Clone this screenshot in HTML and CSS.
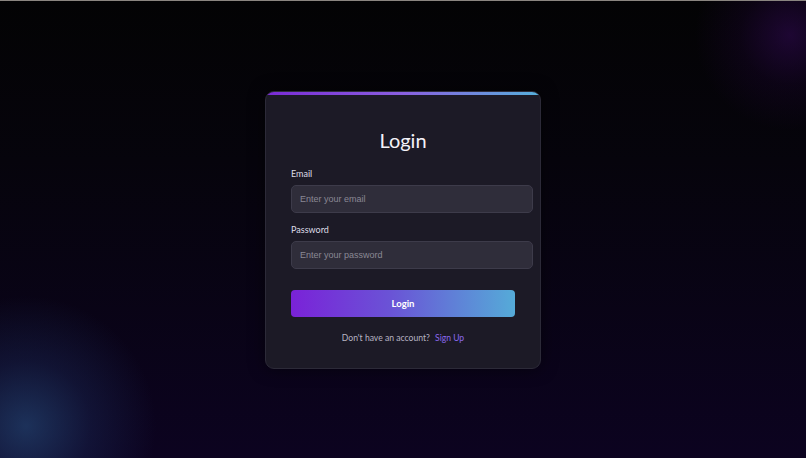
FILE: index.html
```html
<!DOCTYPE html>
<html lang="en">
<head>
<meta charset="utf-8">
<title>Login</title>
<link rel="stylesheet" href="styles.css">
</head>
<body>
<div class="page">
  <div class="card">
    <h1 class="title">Login</h1>
    <form class="form">
      <label class="field">
        <span class="label">Email</span>
        <input class="input" type="email" placeholder="Enter your email">
      </label>
      <label class="field">
        <span class="label">Password</span>
        <input class="input" type="password" placeholder="Enter your password">
      </label>
      <button class="btn" type="button">Login</button>
    </form>
    <p class="footer">Don't have an account? <a class="link" href="#">Sign Up</a></p>
  </div>
</div>
</body>
</html>
```
FILE: styles.css
```css
html, body {
  margin: 0;
  height: 100%;
}
body {
  font-family: "Lato", "Noto Sans", sans-serif;
  border-top: 1px solid #8a8580;
  box-sizing: border-box;
  background:
    radial-gradient(circle at 790px 35px, rgba(55, 10, 95, 0.5) 0, rgba(40, 5, 70, 0.22) 50px, rgba(0,0,0,0) 95px),
    radial-gradient(circle at 26px 426px, rgba(40, 80, 130, 0.6) 0, rgba(30, 50, 100, 0.34) 65px, rgba(0,0,0,0) 130px),
    linear-gradient(180deg, #030304 0%, #06040c 35%, #0c0320 100%);
  overflow: hidden;
}
.page {
  height: 100%;
  display: flex;
  align-items: flex-start;
  justify-content: center;
  padding-top: 90px;
  box-sizing: border-box;
}
.card {
  width: 276px;
  box-sizing: border-box;
  background: #1c1a26;
  border: 1px solid #2c2a38;
  border-radius: 9px;
  padding: 35px 25px 24px;
  position: relative;
  overflow: hidden;
  box-shadow: 0 0 16px rgba(0,0,0,0.5);
}
.card::before {
  content: "";
  position: absolute;
  left: 0;
  right: 0;
  top: 0;
  height: 3px;
  background: linear-gradient(90deg, #7a2bd6, #8a60e0 50%, #56b0dc);
}
.title {
  margin: 0 0 15px;
  text-align: center;
  font-weight: 400;
  font-size: 20px;
  line-height: 26px;
  color: #f4f2f8;
}
.form {
  display: flex;
  flex-direction: column;
}
.field {
  display: flex;
  flex-direction: column;
  margin-bottom: 11px;
}
.label {
  font-size: 9px;
  line-height: 12px;
  color: #dedce6;
  margin-bottom: 5px;
}
.input {
  width: 100%;
  box-sizing: content-box;
  height: 26px;
  padding: 0 8px;
  border: 1px solid #3d3b4a;
  border-radius: 5px;
  background: #2f2d3a;
  color: #e0e0e0;
  font-family: "Liberation Sans", Arial, sans-serif;
  font-size: 9px;
  outline: none;
}
.input::placeholder {
  color: #8a8894;
}
.btn {
  margin-top: 10px;
  width: 100%;
  height: 27px;
  border: 0;
  border-radius: 4px;
  background: linear-gradient(90deg, #7a22d8 0%, #6a54d6 45%, #55abd8 100%);
  color: #ffffff;
  font-family: "Lato", sans-serif;
  font-weight: 700;
  font-size: 9.5px;
}
.footer {
  margin: 15px 0 0;
  text-align: center;
  font-size: 8.6px;
  line-height: 12px;
  color: #b7b4c2;
}
.link {
  color: #8b69ee;
  text-decoration: none;
  margin-left: 3px;
}
```
